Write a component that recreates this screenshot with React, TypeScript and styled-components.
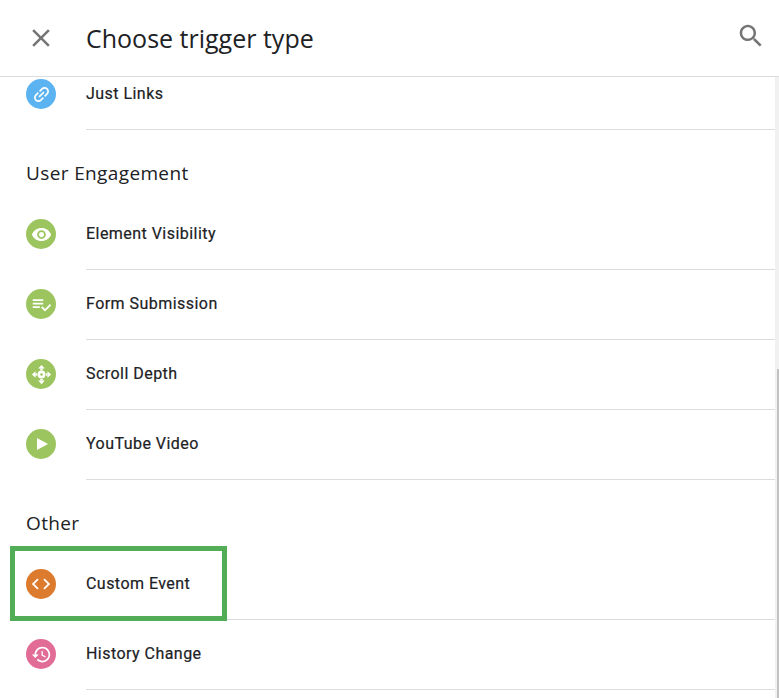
import React, {ReactNode} from 'react';
import styled, {createGlobalStyle} from 'styled-components';

const GlobalStyle = createGlobalStyle`
  html, body {
    margin: 0;
    padding: 0;
    background: #fff;
  }
`

const Page = styled.div`
  position: relative;
  width: 779px;
  height: 698px;
  overflow: hidden;
  background: #fff;
  font-family: Roboto, "Liberation Sans", sans-serif;
  color: #202124;
`

const Header = styled.header`
  display: flex;
  align-items: center;
  box-sizing: border-box;
  height: 77px;
  padding: 0 13px 0 26px;
  border-bottom: 1px solid #dadce0;
`

const HeaderIcon = styled.svg<{ $lift?: boolean }>`
  width: 30px;
  height: 30px;
  margin-bottom: ${({$lift}) => $lift ? 5 : 1}px;
  fill: #757575;
  flex-shrink: 0;
`

const Title = styled.h1`
  flex: 1;
  margin: 0 0 0 30px;
  font-family: "Open Sans", sans-serif;
  font-weight: 400;
  font-size: 25px;
  line-height: 32px;
`

const Scroller = styled.div`
  height: 621px;
  overflow: hidden;
`

const List = styled.div`
  margin-top: -17px;
`

const SectionTitle = styled.h2`
  display: flex;
  align-items: center;
  box-sizing: border-box;
  height: 70px;
  margin: 0;
  padding: 15px 0 0 26px;
  font-family: "Open Sans", sans-serif;
  font-weight: 400;
  font-size: 19px;
  letter-spacing: 0.37px;
`

const Row = styled.div`
  display: flex;
  align-items: center;
  height: 70px;
  padding-left: 26px;
`

const Badge = styled.span<{ $color: string }>`
  display: flex;
  align-items: center;
  justify-content: center;
  width: 30px;
  height: 30px;
  margin-bottom: 2px;
  border-radius: 50%;
  flex-shrink: 0;
  background: ${({$color}) => $color};
`

const BadgeIcon = styled.svg<{ $size?: number, $rotate?: number }>`
  width: ${({$size}) => $size || 21}px;
  height: ${({$size}) => $size || 21}px;
  fill: #fff;
  transform: rotate(${({$rotate}) => $rotate || 0}deg);
`

const Label = styled.div`
  display: flex;
  align-items: center;
  align-self: stretch;
  flex: 1;
  margin-left: 30px;
  padding-bottom: 3px;
  border-bottom: 1px solid #dadce0;
  font-weight: 400;
  font-size: 16px;
  letter-spacing: 0.46px;
  -webkit-text-stroke: 0.2px #202124;
`

const ScrollTrack = styled.div`
  position: absolute;
  top: 77px;
  right: 0;
  bottom: 0;
  width: 4px;
  background: #f1f1f1;
`

const ScrollThumb = styled.div`
  position: absolute;
  top: 292px;
  right: 0;
  bottom: 0;
  width: 2px;
  background: #c1c1c1;
`

const Highlight = styled.div`
  position: absolute;
  left: 10px;
  top: 546px;
  box-sizing: border-box;
  width: 217px;
  height: 75px;
  border: 5px solid #53ad57;
`

const BLUE = '#5bb3f1'
const GREEN = '#9cc560'
const ORANGE = '#dc7a2e'
const PINK = '#e16c96'

function Icon({d, rotate, size}: { d: string, rotate?: number, size?: number }) {
    return (
        <BadgeIcon viewBox="0 0 24 24" $rotate={rotate} $size={size}>
            <path d={d}/>
        </BadgeIcon>
    )
}

function TriggerRow({color, label, children}: { color: string, label: string, children: ReactNode }) {
    return (
        <Row>
            <Badge $color={color}>{children}</Badge>
            <Label>{label}</Label>
        </Row>
    )
}

function App() {
    return (
        <Page>
            <GlobalStyle/>
            <Header>
                <HeaderIcon viewBox="0 0 24 24">
                    <path d="M19 6.41L17.59 5 12 10.59 6.41 5 5 6.41 10.59 12 5 17.59 6.41 19 12 13.41 17.59 19 19 17.59 13.41 12z"/>
                </HeaderIcon>
                <Title>Choose trigger type</Title>
                <HeaderIcon viewBox="0 0 24 24" $lift>
                    <path d="M15.5 14h-.79l-.28-.27C15.41 12.59 16 11.11 16 9.5 16 5.91 13.09 3 9.5 3S3 5.91 3 9.5 5.91 16 9.5 16c1.61 0 3.09-.59 4.23-1.57l.27.28v.79l5 4.99L20.49 19l-4.99-5zm-6 0C7.01 14 5 11.99 5 9.5S7.01 5 9.5 5 14 7.01 14 9.5 11.99 14 9.5 14z"/>
                </HeaderIcon>
            </Header>
            <Scroller>
                <List>
                    <TriggerRow color={BLUE} label="Just Links">
                        <Icon rotate={-45} d="M3.9 12c0-1.71 1.39-3.1 3.1-3.1h4V7H7c-2.76 0-5 2.24-5 5s2.24 5 5 5h4v-1.9H7c-1.71 0-3.1-1.39-3.1-3.1zM8 13h8v-2H8v2zm9-6h-4v1.9h4c1.71 0 3.1 1.39 3.1 3.1s-1.39 3.1-3.1 3.1h-4V17h4c2.76 0 5-2.24 5-5s-2.24-5-5-5z"/>
                    </TriggerRow>
                    <SectionTitle>User Engagement</SectionTitle>
                    <TriggerRow color={GREEN} label="Element Visibility">
                        <Icon d="M12 4.5C7 4.5 2.73 7.61 1 12c1.73 4.39 6 7.5 11 7.5s9.27-3.11 11-7.5c-1.73-4.39-6-7.5-11-7.5zM12 17c-2.76 0-5-2.24-5-5s2.24-5 5-5 5 2.24 5 5-2.24 5-5 5zm0-8c-1.66 0-3 1.34-3 3s1.34 3 3 3 3-1.34 3-3-1.34-3-3-3z"/>
                    </TriggerRow>
                    <TriggerRow color={GREEN} label="Form Submission">
                        <Icon d="M14 10H2v2h12v-2zm0-4H2v2h12V6zM2 16h8v-2H2v2zm19.5-4.5L23 13l-6.99 7-4.51-4.5L13 14l3.01 3 5.49-5.5z"/>
                    </TriggerRow>
                    <TriggerRow color={GREEN} label="Scroll Depth">
                        <Icon d="M12 1l3.800 4.200H8.200zM12 23l-3.800-4.200h7.600zM1 12l4.200-3.800v7.600zM23 12l-4.200 3.800V8.200zM12 7.500a4.500 4.500 0 1 0 0 9 4.500 4.500 0 0 0 0-9zm0 3a1.500 1.500 0 1 1 0 3 1.500 1.500 0 0 1 0-3zM5.500 10.500h1.500v3H5.500zM17 10.500h1.500v3H17zM10.500 5.500h3V7h-3zM10.500 17h3v1.500h-3z"/>
                    </TriggerRow>
                    <TriggerRow color={GREEN} label="YouTube Video">
                        <Icon size={24} d="M8 6l11 6-11 6z"/>
                    </TriggerRow>
                    <SectionTitle>Other</SectionTitle>
                    <TriggerRow color={ORANGE} label="Custom Event">
                        <Icon size={22} d="M9.4 16.600L4.800 12l4.600-4.600L8 6l-6 6 6 6 1.400-1.400zm5.200 0l4.600-4.600-4.600-4.600L16 6l6 6-6 6-1.400-1.400z"/>
                    </TriggerRow>
                    <TriggerRow color={PINK} label="History Change">
                        <Icon d="M13 3c-4.970 0-9 4.030-9 9H1l3.890 3.890.070.140L9 12H6c0-3.870 3.130-7 7-7s7 3.130 7 7-3.130 7-7 7c-1.930 0-3.680-.790-4.940-2.060l-1.420 1.420C8.270 19.990 10.510 21 13 21c4.970 0 9-4.030 9-9s-4.030-9-9-9zm-1 5v5l4.280 2.540.720-1.210-3.500-2.080V8H12z"/>
                    </TriggerRow>
                </List>
            </Scroller>
            <ScrollTrack>
                <ScrollThumb/>
            </ScrollTrack>
            <Highlight/>
        </Page>
    );
}

export default App;
